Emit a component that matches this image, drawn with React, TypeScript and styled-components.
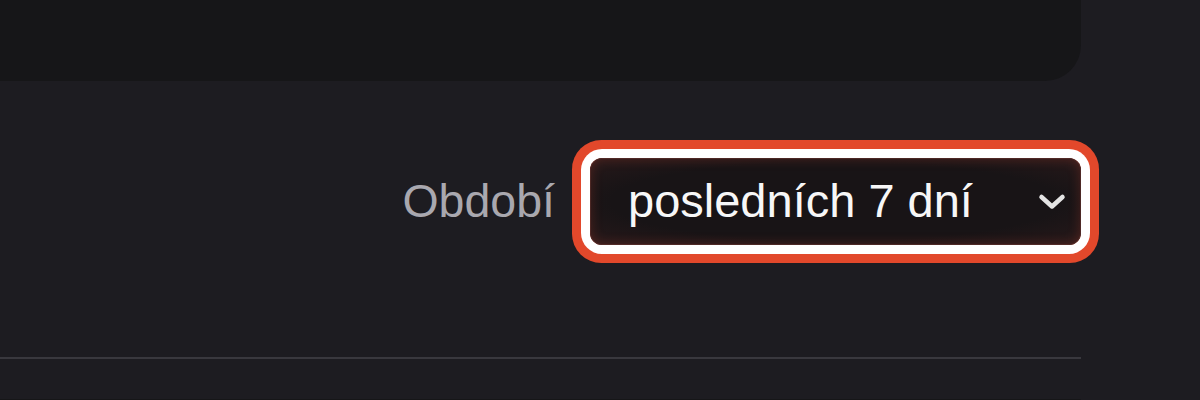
import React from "react";
import styled, { createGlobalStyle } from "styled-components";

const Global = createGlobalStyle`
  html, body {
    margin: 0;
    padding: 0;
    background: #1d1c21;
    overflow: hidden;
  }
  body {
    font-family: "Liberation Sans", Arial, sans-serif;
  }
`;

const Page = styled.div`
  width: 1131px;
  margin-left: -50px;
  margin-top: -40px;
  display: flex;
  flex-direction: column;
`;

const Card = styled.div<{ $h: number }>`
  height: ${(p) => p.$h}px;
  background: #161618;
  border-radius: 36px;
`;

const PeekCard = styled.div`
  height: 1px;
  background: #161618;
  border-radius: 36px 36px 0 0;
`;

const FilterRow = styled.div`
  display: flex;
  justify-content: flex-end;
  align-items: center;
  gap: 35px;
  padding: 77px 0 112px;
`;

const Label = styled.label`
  font-size: 46.5px;
  color: #a9a8af;
  line-height: 1.15;
`;

const Select = styled.button`
  width: 491px;
  height: 87px;
  box-sizing: border-box;
  display: flex;
  align-items: center;
  justify-content: space-between;
  padding: 0 14px 0 37px;
  border-radius: 12px;
  border: 1px solid rgba(150, 70, 60, 0.4);
  background: radial-gradient(
      ellipse at center,
      #181416 65%,
      #28191a 100%
    );
  color: #f7f7f7;
  font-family: "Liberation Sans", Arial, sans-serif;
  font-size: 47px;
  line-height: 1.15;
  cursor: pointer;
  box-shadow: inset 0 0 12px rgba(170, 60, 45, 0.32), 0 0 0 9px #ffffff,
    0 0 0 18px #e2482b;
`;

const Divider = styled.div`
  height: 2px;
  background: #39383e;
`;

const Spacer = styled.div`
  height: 40px;
`;

const Chevron = () => (
  <svg width="28" height="18" viewBox="0 0 28 18" aria-hidden>
    <polyline
      points="3.5,4 14,13.5 24.5,4"
      fill="none"
      stroke="#e4e4e4"
      strokeWidth="4.5"
      strokeLinecap="round"
      strokeLinejoin="round"
    />
  </svg>
);

export default function App() {
  return (
    <>
      <Global />
      <Page>
        <Card $h={121} />
        <FilterRow>
          <Label>Období</Label>
          <Select role="combobox" aria-label="Období">
            <span>posledních 7 dní</span>
            <Chevron />
          </Select>
        </FilterRow>
        <Divider />
        <Spacer />
        <PeekCard />
      </Page>
    </>
  );
}
